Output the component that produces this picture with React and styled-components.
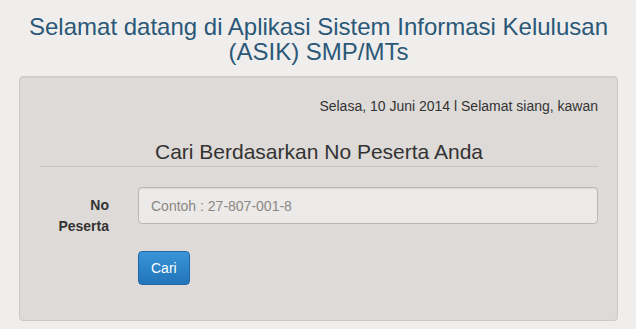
import React from "react";
import styled, { createGlobalStyle } from "styled-components";

const GlobalStyle = createGlobalStyle`
  html, body {
    margin: 0;
    padding: 0;
    background: #efeeec;
    font-family: "Liberation Sans", Arial, sans-serif;
    color: #333;
  }
  * {
    box-sizing: border-box;
  }
`;

const Page = styled.div`
  width: 636px;
  height: 329px;
  padding: 14px 18px 0 19px;
  background: #efeeec;
`;

const Title = styled.h3`
  margin: 0 0 12px;
  font-size: 24px;
  font-weight: normal;
  line-height: 25px;
  text-align: center;
  color: #2b5878;
`;

const Well = styled.div`
  height: 245px;
  padding: 20px 19px 0 20px;
  background: #dddad7;
  border: 1px solid #cdc9c5;
  border-radius: 4px;
  box-shadow: inset 0 1px 1px rgba(0, 0, 0, 0.05);
`;

const DateLine = styled.div`
  text-align: right;
  font-size: 14px;
  line-height: 18px;
  color: #333;
`;

const Legend = styled.div`
  margin-top: 24px;
  padding-bottom: 2px;
  border-bottom: 1px solid #c6c2be;
  text-align: center;
  font-size: 21px;
  line-height: 25px;
  color: #333;
`;

const Form = styled.form`
  display: grid;
  grid-template-columns: 69px 1fr;
  column-gap: 29px;
  row-gap: 14px;
  margin-top: 20px;
`;

const Label = styled.label`
  padding-top: 8px;
  text-align: right;
  font-size: 14px;
  font-weight: bold;
  line-height: 21px;
  color: #333;
`;

const Input = styled.input`
  width: 100%;
  height: 37px;
  padding: 0 12px;
  background: #eceae8;
  border: 1px solid #bab6b2;
  border-radius: 4px;
  box-shadow: inset 0 1px 1px rgba(0, 0, 0, 0.075);
  font-family: inherit;
  font-size: 14px;
  color: #555;
  outline: none;

  &::placeholder {
    color: #8a8784;
  }
`;

const Button = styled.button`
  grid-column: 2;
  justify-self: start;
  height: 34px;
  padding: 0 12px;
  background: linear-gradient(to bottom, #3895d8 0%, #2274b8 100%);
  border: 1px solid #2468a8;
  border-radius: 4px;
  font-family: inherit;
  font-size: 14px;
  color: #fff;
  cursor: pointer;
`;

export default function App() {
  return (
    <Page>
      <GlobalStyle />
      <Title>
        Selamat datang di Aplikasi Sistem Informasi Kelulusan
        <br />
        (ASIK) SMP/MTs
      </Title>
      <Well>
        <DateLine>Selasa, 10 Juni 2014 l Selamat siang, kawan</DateLine>
        <Legend>Cari Berdasarkan No Peserta Anda</Legend>
        <Form onSubmit={e => e.preventDefault()}>
          <Label htmlFor="nopes">No Peserta</Label>
          <Input id="nopes" placeholder="Contoh : 27-807-001-8" />
          <Button type="submit">Cari</Button>
        </Form>
      </Well>
    </Page>
  );
}
